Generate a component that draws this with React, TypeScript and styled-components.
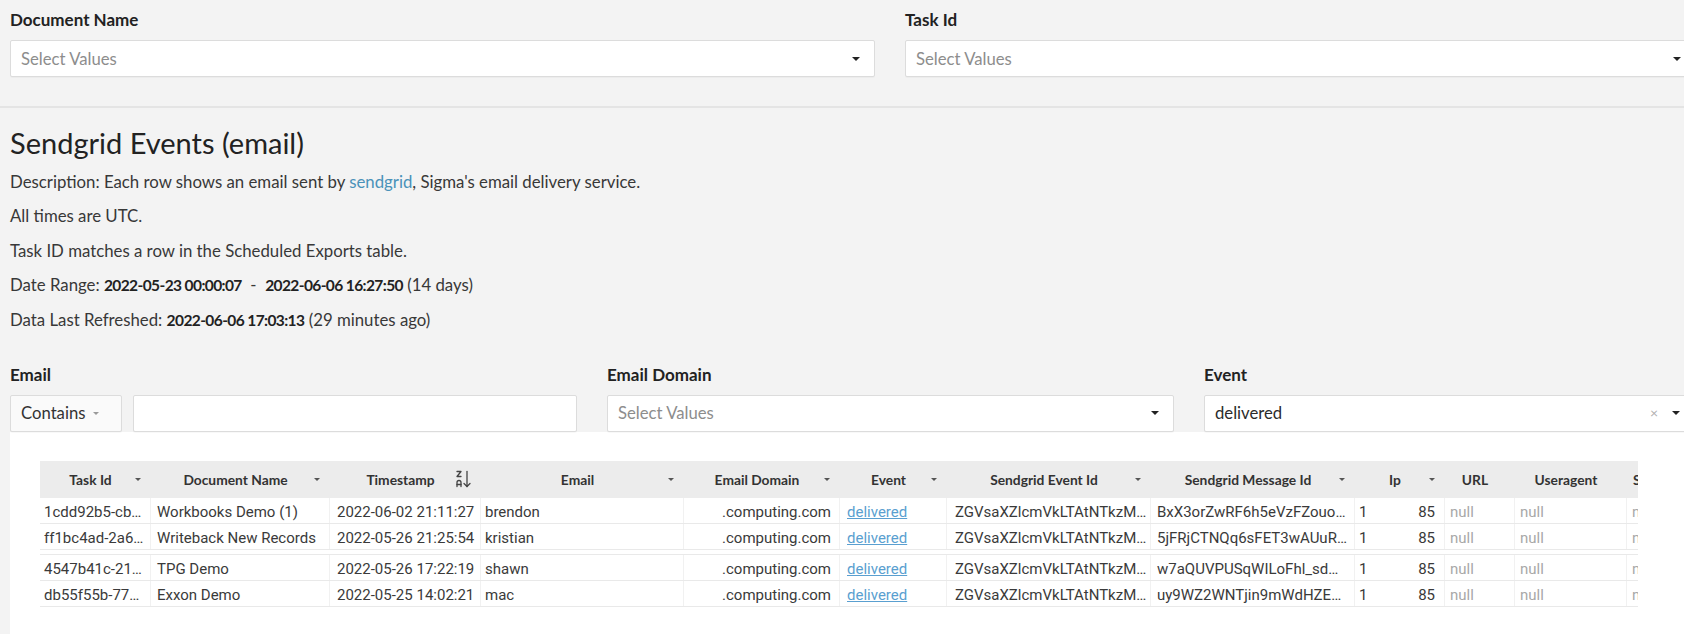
import React from "react";
import styled, { createGlobalStyle } from "styled-components";

const GlobalStyle = createGlobalStyle`
  html, body {
    margin: 0;
    padding: 0;
    background: #f3f3f3;
    overflow: hidden;
  }
  body {
    font-family: Lato, "Open Sans", sans-serif;
    color: #333;
  }
`;

const Page = styled.div`
  width: 1684px;
  height: 634px;
  overflow: hidden;
  background: #f3f3f3;
`;

const TopFilters = styled.div`
  display: grid;
  grid-template-columns: 865px 791px;
  column-gap: 30px;
  padding: 10px 0 29px 10px;
  border-bottom: 2px solid #e4e4e4;
`;

const Field = styled.div`
  display: flex;
  flex-direction: column;
  gap: 10px;
`;

const Label = styled.div`
  font-size: 17px;
  font-weight: 700;
  line-height: 20px;
  color: #222;
`;

const Select = styled.div`
  height: 37px;
  box-sizing: border-box;
  display: flex;
  align-items: center;
  gap: 14px;
  padding: 0 14px 0 10px;
  background: #fff;
  border: 1px solid #dcdcdc;
  border-radius: 2px;
  box-shadow: 0 1px 1px rgba(0, 0, 0, 0.03);
  font-size: 16.7px;
`;

const Placeholder = styled.span<{ $filled?: boolean }>`
  flex: 1;
  color: ${(p) => (p.$filled ? "#2b2b2b" : "#8d8d8d")};
`;

const Caret = styled.span<{ $size?: number; $color?: string }>`
  width: 0;
  height: 0;
  border-left: ${(p) => (p.$size ?? 8) / 2}px solid transparent;
  border-right: ${(p) => (p.$size ?? 8) / 2}px solid transparent;
  border-top: ${(p) => (p.$size ?? 8) / 2}px solid ${(p) => p.$color ?? "#222"};
`;

const Clear = styled.span`
  color: #b0b0b0;
  font-size: 14px;
  line-height: 1;
`;

const Content = styled.div`
  padding: 19px 0 0 10px;
`;

const Title = styled.h1`
  margin: 0;
  font-size: 29px;
  font-weight: 400;
  line-height: 32px;
  color: #222;
`;

const Desc = styled.div`
  display: flex;
  flex-direction: column;
  gap: 14.6px;
  margin-top: 12.5px;
  font-size: 16.8px;
  line-height: 20px;
  color: #383838;
`;

const Line = styled.div`
  white-space: nowrap;
  b {
    font-size: 15.5px;
    font-weight: 700;
    letter-spacing: -0.6px;
    color: #222;
  }
  a {
    color: #4a92b9;
    text-decoration: none;
  }
`;

const EventFilters = styled.div`
  display: grid;
  grid-template-columns: 567px 567px 491px;
  column-gap: 30px;
  margin-top: 35px;
`;

const EmailInputs = styled.div`
  display: flex;
  gap: 11px;
`;

const Operator = styled(Select)`
  width: 112px;
  gap: 8px;
  background: #fafafa;
  color: #333;
`;

const TextInput = styled(Select)`
  flex: 1;
`;

const Panel = styled.div`
  margin-left: 10px;
  background: #fff;
  padding: 29px 0 29px 30px;
`;

const Table = styled.div`
  width: 1598px;
  overflow: hidden;
`;

const cols = "111px 179px 151px 203px 156px 107px 204px 204px 90px 70px 112px 120px";

const HeaderRow = styled.div`
  display: grid;
  grid-template-columns: ${cols};
  height: 37px;
  background: #ececec;
  font-size: 13.8px;
  font-weight: 700;
  color: #333;
`;

const HeaderCell = styled.div<{ $start?: boolean }>`
  display: grid;
  grid-template-columns: ${(p) => (p.$start ? "auto 1fr" : "1fr auto 1fr")};
  align-items: center;
  padding: ${(p) => (p.$start ? "0 0 0 6px" : "0 10px 0 0")};
  white-space: nowrap;
  overflow: hidden;
`;

const HeaderIcon = styled.span`
  justify-self: end;
  display: flex;
  align-items: center;
`;

const Row = styled.div<{ $split?: boolean }>`
  display: grid;
  grid-template-columns: ${cols};
  height: 26px;
  box-sizing: border-box;
  border-bottom: 1px solid #e9e9e9;
  ${(p) => (p.$split ? "margin-top: 4px; border-top: 1px solid #e9e9e9; height: 27px;" : "")}
  font-family: Roboto, "Liberation Sans", sans-serif;
  font-size: 15px;
  line-height: 24px;
  color: #3a3a3a;
`;

const Cell = styled.div<{ $align?: "left" | "right"; $muted?: boolean; $pad?: number }>`
  padding: 2px 8px 0 ${(p) => p.$pad ?? 5}px;
  text-align: ${(p) => p.$align ?? "left"};
  color: ${(p) => (p.$muted ? "#a8a8a8" : "inherit")};
  white-space: nowrap;
  overflow: hidden;
  border-right: 1px solid #f1f1f1;
`;

const IpCell = styled(Cell)`
  display: flex;
  justify-content: space-between;
  padding: 2px 9px 0 4px;
`;

const Link = styled.a`
  color: #5a9fd0;
  text-decoration: underline;
`;

const SortIcon = () => (
  <svg width="16" height="18" viewBox="0 0 16 18" fill="none" stroke="#444" strokeWidth="1.3" strokeLinecap="round" strokeLinejoin="round">
    <path d="M2 1.5h4l-4 5h4" />
    <path d="M2 16.5v-4a2 2 0 0 1 4 0v4" />
    <path d="M2 14.5h4" />
    <path d="M12 1.5v15" />
    <path d="M9 13.5l3 3 3-3" />
  </svg>
);

type Header = { label: string; icon?: "caret" | "sort"; start?: boolean };

const headers: Header[] = [
  { label: "Task Id", icon: "caret" },
  { label: "Document Name", icon: "caret" },
  { label: "Timestamp", icon: "sort" },
  { label: "Email", icon: "caret" },
  { label: "Email Domain", icon: "caret" },
  { label: "Event", icon: "caret" },
  { label: "Sendgrid Event Id", icon: "caret" },
  { label: "Sendgrid Message Id", icon: "caret" },
  { label: "Ip", icon: "caret" },
  { label: "URL" },
  { label: "Useragent" },
  { label: "Sg Status", start: true },
];

const rows = [
  {
    taskId: "1cdd92b5-cb…",
    doc: "Workbooks Demo (1)",
    ts: "2022-06-02 21:11:27",
    email: "brendon",
    msgId: "BxX3orZwRF6h5eVzFZouo…",
  },
  {
    taskId: "ff1bc4ad-2a6…",
    doc: "Writeback New Records",
    ts: "2022-05-26 21:25:54",
    email: "kristian",
    msgId: "5jFRjCTNQq6sFET3wAUuR…",
  },
  {
    taskId: "4547b41c-21…",
    doc: "TPG Demo",
    ts: "2022-05-26 17:22:19",
    email: "shawn",
    msgId: "w7aQUVPUSqWILoFhl_sd…",
  },
  {
    taskId: "db55f55b-77…",
    doc: "Exxon Demo",
    ts: "2022-05-25 14:02:21",
    email: "mac",
    msgId: "uy9WZ2WNTjin9mWdHZE…",
  },
];

export default function App() {
  return (
    <Page>
      <GlobalStyle />
      <TopFilters>
        <Field>
          <Label>Document Name</Label>
          <Select>
            <Placeholder>Select Values</Placeholder>
            <Caret />
          </Select>
        </Field>
        <Field>
          <Label>Task Id</Label>
          <Select>
            <Placeholder>Select Values</Placeholder>
            <Caret />
          </Select>
        </Field>
      </TopFilters>

      <Content>
        <Title>Sendgrid Events (email)</Title>
        <Desc>
          <Line>
            Description: Each row shows an email sent by <a href="#">sendgrid</a>, Sigma's email delivery service.
          </Line>
          <Line>All times are UTC.</Line>
          <Line>Task ID matches a row in the Scheduled Exports table.</Line>
          <Line>
            Date Range: <b>2022-05-23 00:00:07</b> &nbsp;-&nbsp; <b>2022-06-06 16:27:50</b> (14 days)
          </Line>
          <Line>
            Data Last Refreshed: <b>2022-06-06 17:03:13</b> (29 minutes ago)
          </Line>
        </Desc>

        <EventFilters>
          <Field>
            <Label>Email</Label>
            <EmailInputs>
              <Operator>
                <span>Contains</span>
                <Caret $size={7} $color="#9a9a9a" />
              </Operator>
              <TextInput />
            </EmailInputs>
          </Field>
          <Field>
            <Label>Email Domain</Label>
            <Select>
              <Placeholder>Select Values</Placeholder>
              <Caret />
            </Select>
          </Field>
          <Field>
            <Label>Event</Label>
            <Select>
              <Placeholder $filled>delivered</Placeholder>
              <Clear>×</Clear>
              <Caret />
            </Select>
          </Field>
        </EventFilters>
      </Content>

      <Panel>
        <Table>
          <HeaderRow>
            {headers.map((h) => (
              <HeaderCell key={h.label} $start={h.start}>
                {!h.start && <span />}
                <span>{h.label}</span>
                <HeaderIcon>
                  {h.icon === "caret" && <Caret $size={7} $color="#555" />}
                  {h.icon === "sort" && <SortIcon />}
                </HeaderIcon>
              </HeaderCell>
            ))}
          </HeaderRow>
          {rows.map((r, i) => (
            <Row key={r.taskId} $split={i === 2}>
              <Cell $pad={4}>{r.taskId}</Cell>
              <Cell $pad={6}>{r.doc}</Cell>
              <Cell $pad={7}>{r.ts}</Cell>
              <Cell $pad={4}>{r.email}</Cell>
              <Cell $align="right">.computing.com</Cell>
              <Cell $pad={7}>
                <Link href="#">delivered</Link>
              </Cell>
              <Cell $pad={8}>ZGVsaXZlcmVkLTAtNTkzM…</Cell>
              <Cell $pad={6}>{r.msgId}</Cell>
              <IpCell>
                <span>1</span>
                <span>85</span>
              </IpCell>
              <Cell $muted>null</Cell>
              <Cell $muted>null</Cell>
              <Cell $muted>null</Cell>
            </Row>
          ))}
        </Table>
      </Panel>
    </Page>
  );
}
